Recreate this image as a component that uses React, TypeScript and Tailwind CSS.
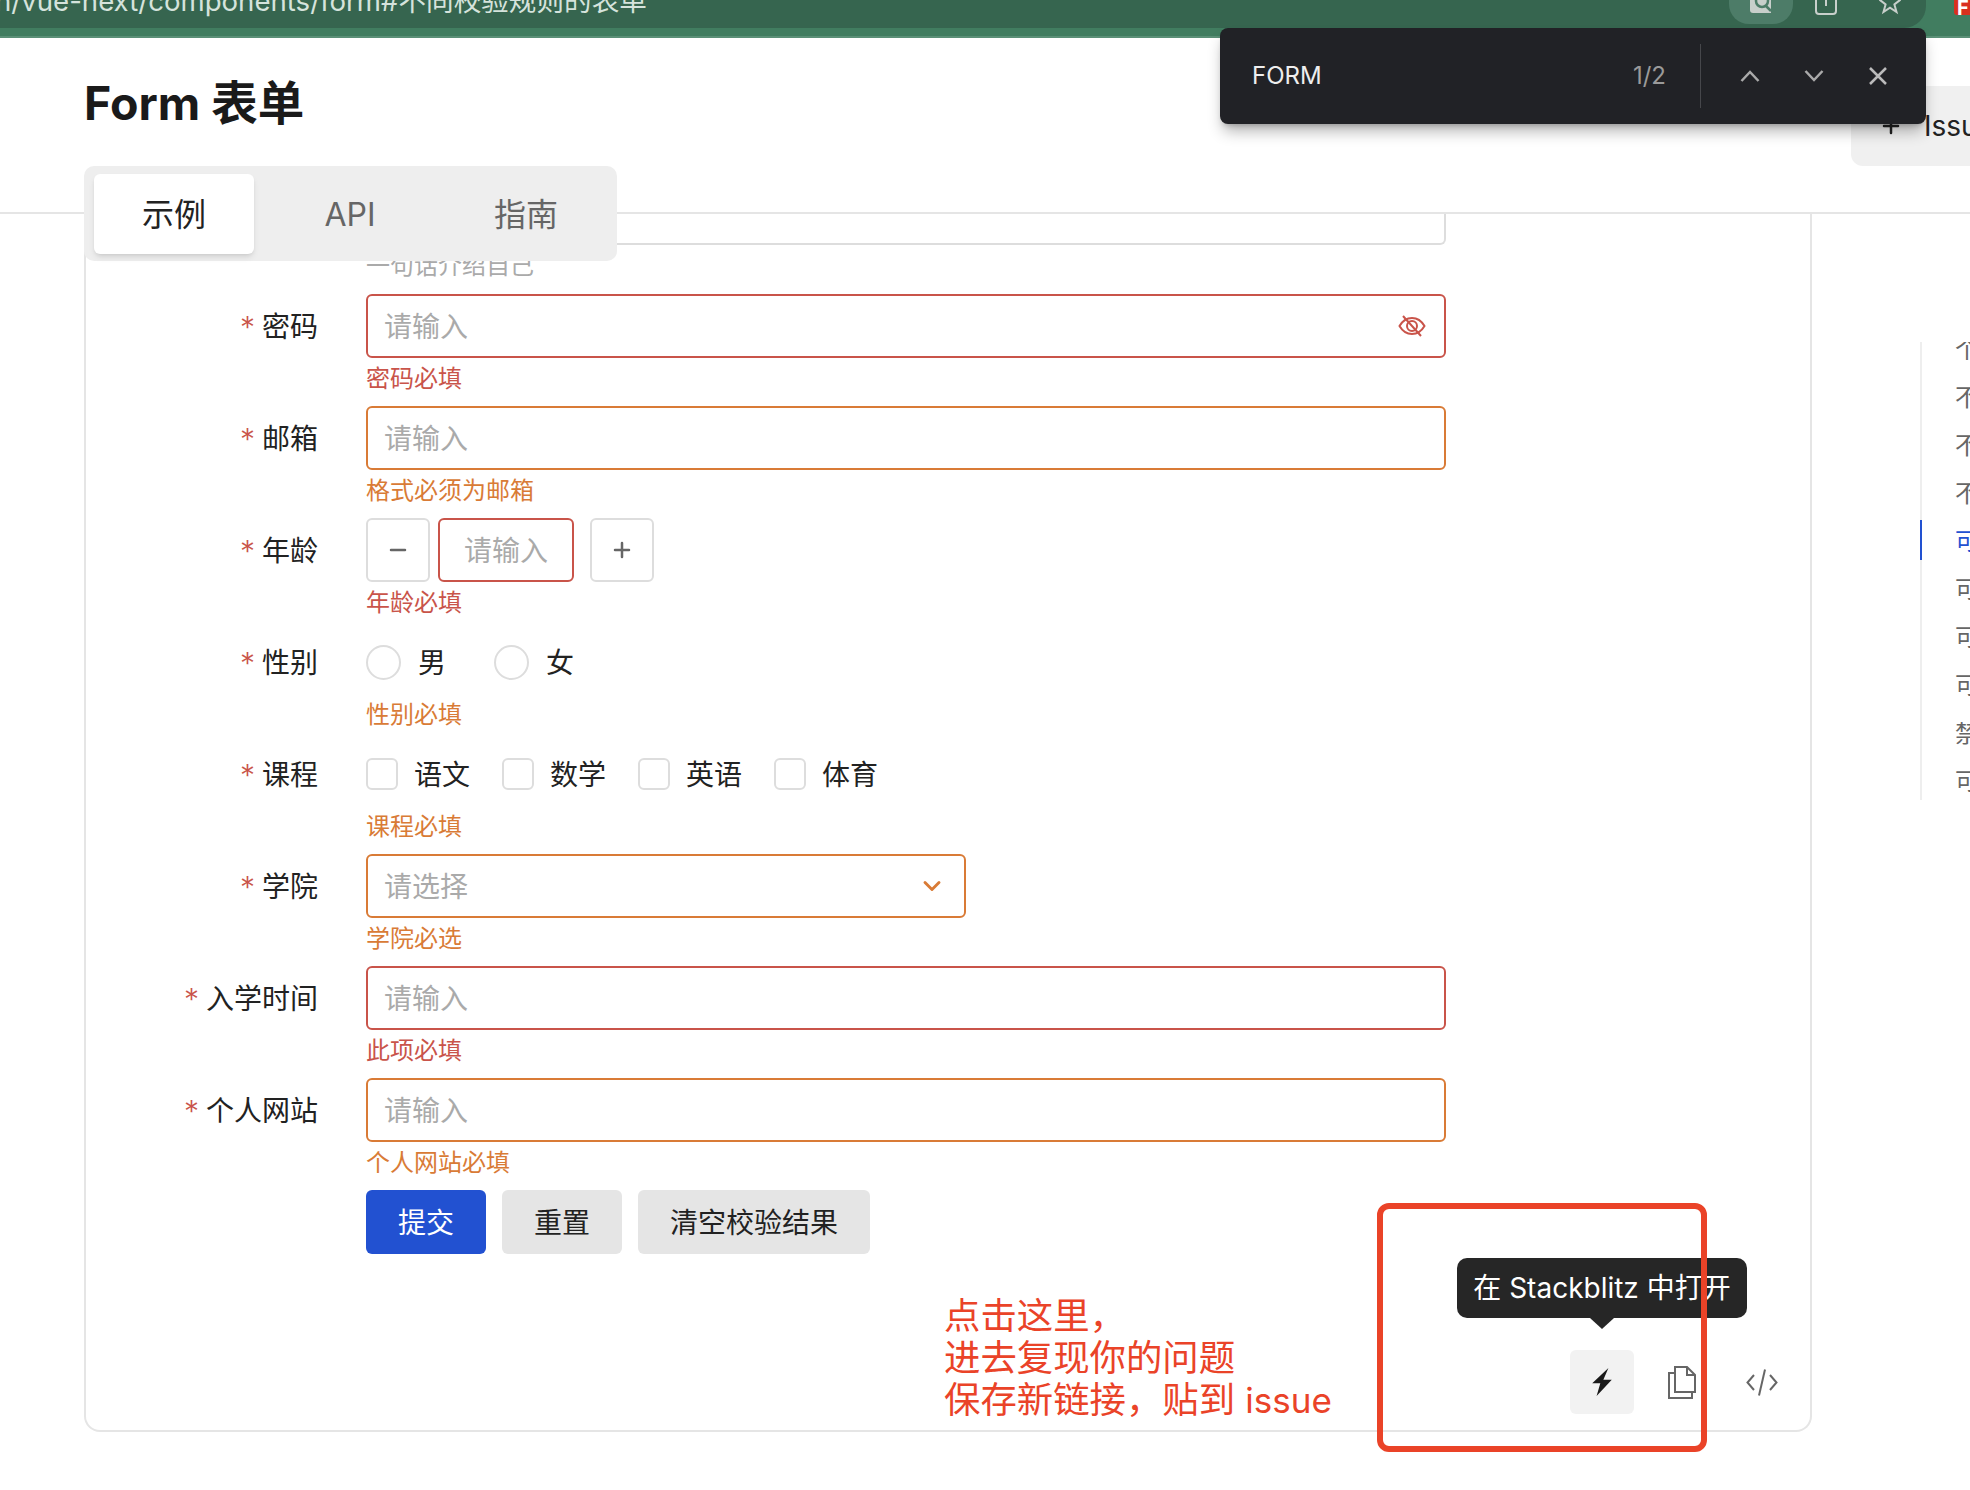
import React from 'react';
import { Plus, Minus, ChevronDown } from 'lucide-react';

type Tone = 'red' | 'orange';

const borderTone: Record<Tone, string> = { red: 'border-[#c9544a]', orange: 'border-[#d97b36]' };
const textTone: Record<Tone, string> = { red: 'text-[#c9544a]', orange: 'text-[#d97b36]' };

const Help = ({ tone, children }: { tone: Tone; children: React.ReactNode }) => (
  <div className={`h-[40px] text-[24px] leading-[41px] ${textTone[tone]}`}>{children}</div>
);

const Row = ({ label, children }: { label: string; children: React.ReactNode }) => (
  <div className="mb-2 flex">
    <div className="flex h-[64px] w-[232px] shrink-0 items-center justify-end pt-[2px] text-[28px] text-[#222]">
      <span className="mr-[7px] text-[30px] font-light text-[#c9544a]">*</span>
      {label}
    </div>
    <div className="ml-[48px]">{children}</div>
  </div>
);

const TextBox = ({ tone, text = '请输入', className = 'w-[1080px]', children }: { tone: Tone; text?: string; className?: string; children?: React.ReactNode }) => (
  <div className={`flex h-[64px] items-center justify-between rounded-md border-[2.5px] pl-[16px] pr-[18px] text-[28px] text-[#aaa] ${borderTone[tone]} ${className}`}>
    <span className="pt-[2px]">{text}</span>
    {children}
  </div>
);

const Radio = ({ label }: { label: string }) => (
  <div className="flex items-center">
    <span className="h-[35px] w-[35px] rounded-full border-2 border-[#ddd]" />
    <span className="ml-[17px] pt-[2px] text-[28px] text-[#222]">{label}</span>
  </div>
);

const Check = ({ label }: { label: string }) => (
  <div className="flex items-center">
    <span className="h-[32px] w-[32px] rounded-md border-2 border-[#ddd]" />
    <span className="ml-[16px] pt-[2px] text-[28px] text-[#222]">{label}</span>
  </div>
);

const StepButton = ({ children }: { children: React.ReactNode }) => (
  <div className="flex h-[64px] w-[64px] items-center justify-center rounded-md border-2 border-[#ddd] text-[#666]">{children}</div>
);

const tocItems = ['个人信息', '不同尺寸', '不同布局', '不同对齐', '可校验', '可重置', '可清空', '可分步', '禁用状态', '可自定义'];

export default function App() {
  return (
    <div className="relative h-[1490px] w-[1970px] overflow-hidden bg-white font-['Inter','Noto_Sans_CJK_SC',sans-serif]">
      {/* browser chrome, cut off at the top */}
      <div className="h-[38px] border-b-2 border-[#5b9077] bg-[#417d60]">
        <div className="flex h-[28px] w-[1926px] justify-between overflow-hidden rounded-br-[22px] bg-[#36654f]">
          <div className="-ml-[5px] -mt-[18px] whitespace-nowrap text-[27.6px] leading-[38px] text-[#d5e3dc]">n/vue-next/components/form#不同校验规则的表单</div>
          <div className="flex">
            <div className="mr-[21px] flex h-[24px] w-[64px] items-start justify-center rounded-b-[20px] bg-[#4d7c68]">
              <svg width="22" height="14" viewBox="0 0 22 14">
                <path d="M0 0 H21 V13 H3 A3 3 0 0 1 0 10 Z" fill="#c8cfcb" />
                <circle cx="12" cy="1" r="6" fill="none" stroke="#4d7c68" strokeWidth="2.5" />
                <path d="M16 6 L21 11" stroke="#4d7c68" strokeWidth="2.5" />
              </svg>
            </div>
            <div className="mr-[40px] flex h-[24px] w-[24px] items-start">
              <svg width="24" height="15" viewBox="0 0 24 15" fill="none" stroke="#c8cfcb" strokeWidth="2">
                <path d="M2 0 V11 A3 3 0 0 0 5 14 H19 A3 3 0 0 0 22 11 V0" />
                <path d="M12 0 V6" />
              </svg>
            </div>
            <div className="mr-[24px] flex w-[24px] items-start">
              <svg width="24" height="15" viewBox="0 0 24 15" fill="none" stroke="#c8cfcb" strokeWidth="2">
                <path d="M1.5 -0.4 L7.6 4.4 L5.5 12 L12 7.6 L18.5 12 L16.4 4.4 L22.5 -0.4" />
              </svg>
            </div>
          </div>
        </div>
      </div>

      {/* page header */}
      <div className="flex h-[176px] justify-between border-b-2 border-[#e5e5e5] pl-[84px]">
        <h1 className="mt-[35px] text-[46.5px] font-bold leading-[60px] text-[#1a1a1a]">Form 表单</h1>
        <div className="mt-[48px] flex h-[80px] w-[119px] items-center overflow-hidden rounded-l-xl bg-[#f0f0f0] pl-[28px] text-[28px] text-[#222]">
          <Plus className="shrink-0" size={24} strokeWidth={2.5} />
          <span className="ml-[21px]">Issue</span>
        </div>
      </div>

      <div className="flex">
        {/* demo card */}
        <div className="ml-[84px] h-[1218px] w-[1728px] shrink-0 rounded-b-2xl border-2 border-t-0 border-[#e5e5e5]">
          <div className="pl-[280px]">
            <div className="h-[31px] w-[1080px] rounded-b-md border-2 border-t-0 border-[#ddd]" />
            <div className="h-[49px] pt-[5px] text-[24px] leading-[32px] text-[#aaa]">一句话介绍自己</div>
          </div>

          <Row label="密码">
            <TextBox tone="red">
              <svg width="28" height="22" viewBox="0 0 28 22" fill="none" stroke="#c9544a" strokeWidth="2">
                <path d="M1.5 11 C5 5 10 3 14 3 C18 3 23 5 26.5 11 C23 17 18 19 14 19 C10 19 5 17 1.5 11 Z" />
                <circle cx="14" cy="11" r="5" />
                <path d="M5 1 L23 21" />
              </svg>
            </TextBox>
            <Help tone="red">密码必填</Help>
          </Row>

          <Row label="邮箱">
            <TextBox tone="orange" />
            <Help tone="orange">格式必须为邮箱</Help>
          </Row>

          <Row label="年龄">
            <div className="flex">
              <StepButton><Minus size={24} strokeWidth={2.5} /></StepButton>
              <div className="ml-[8px] flex h-[64px] w-[136px] items-center justify-center rounded-md border-[2.5px] border-[#c9544a] pt-[2px] text-[28px] text-[#aaa]">请输入</div>
              <div className="ml-[16px]"><StepButton><Plus size={24} strokeWidth={2.5} /></StepButton></div>
            </div>
            <Help tone="red">年龄必填</Help>
          </Row>

          <Row label="性别">
            <div className="flex h-[64px] items-center gap-[48px]">
              <Radio label="男" />
              <Radio label="女" />
            </div>
            <Help tone="orange">性别必填</Help>
          </Row>

          <Row label="课程">
            <div className="flex h-[64px] items-center gap-[32px]">
              <Check label="语文" />
              <Check label="数学" />
              <Check label="英语" />
              <Check label="体育" />
            </div>
            <Help tone="orange">课程必填</Help>
          </Row>

          <Row label="学院">
            <TextBox tone="orange" text="请选择" className="w-[600px]">
              <ChevronDown className="text-[#d97b36]" size={28} strokeWidth={2.5} />
            </TextBox>
            <Help tone="orange">学院必选</Help>
          </Row>

          <Row label="入学时间">
            <TextBox tone="red" />
            <Help tone="red">此项必填</Help>
          </Row>

          <Row label="个人网站">
            <TextBox tone="orange" />
            <Help tone="orange">个人网站必填</Help>
          </Row>

          <div className="flex gap-4 pl-[280px] text-[28px] text-[#222]">
            <div className="flex h-[64px] w-[120px] items-center justify-center rounded-md bg-[#2251d1] pt-[2px] text-white">提交</div>
            <div className="flex h-[64px] w-[120px] items-center justify-center rounded-md bg-[#e5e5e5] pt-[2px]">重置</div>
            <div className="flex h-[64px] w-[232px] items-center justify-center rounded-md bg-[#e5e5e5] pt-[2px]">清空校验结果</div>
          </div>

          {/* demo toolbar */}
          <div className="mt-[96px] flex justify-end gap-4 pr-4">
            <div className="relative flex h-[64px] w-[64px] items-center justify-center rounded-md bg-[#f2f2f2]">
              <svg width="20" height="28" viewBox="0 0 58 83" fill="#1a1a1a">
                <path d="M48 0 L0 45 H24 L13 83 L58 35 H33 Z" />
              </svg>
              <div className="absolute bottom-[85px] left-1/2 -translate-x-1/2">
                <div className="flex h-[60px] w-[290px] items-center justify-center whitespace-nowrap rounded-[10px] bg-[#262626] text-[28px] text-white">在 Stackblitz 中打开</div>
                <div className="mx-auto h-0 w-0 border-x-[12px] border-t-[11px] border-x-transparent border-t-[#262626]" />
              </div>
            </div>
            <div className="flex h-[64px] w-[64px] items-center justify-center">
              <svg width="28" height="33" viewBox="0 0 28 33" fill="none" stroke="#666" strokeWidth="2">
                <path d="M7 1 H19 L27 9 V26 H7 Z" />
                <path d="M19 1 V9 H27" />
                <path d="M7 7 H1 V32 H24 V26" />
              </svg>
            </div>
            <div className="flex h-[64px] w-[64px] items-center justify-center">
              <svg width="32" height="27" viewBox="0 0 32 27" fill="none" stroke="#666" strokeWidth="2">
                <path d="M8 6 L1.5 13.5 L8 21" />
                <path d="M19 0.5 L13 26.5" />
                <path d="M24 6 L30.5 13.5 L24 21" />
              </svg>
            </div>
          </div>
        </div>

        {/* anchor list, runs off the right edge */}
        <div className="relative ml-[108px] mt-[128px] h-[458px] w-[500px] shrink-0 overflow-hidden border-l-2 border-[#eee]">
          <div className="-mt-[16px] pl-[33px]">
            {tocItems.map((item, i) => (
              <div key={i} className={`h-[48px] whitespace-nowrap text-[24px] leading-[48px] ${i === 4 ? 'text-[#2251d1]' : 'text-[#666]'}`}>{item}</div>
            ))}
          </div>
        </div>
      </div>

      <div className="absolute left-[1920px] top-[520px] h-[40px] w-[2px] bg-[#2251d1]" />

      {/* tabs stuck over the header line */}
      <div className="absolute left-[84px] top-[166px] flex h-[95px] w-[533px] rounded-[10px] bg-[#eee] px-[10px] pt-[8px] text-[32px] text-[#666]">
        <div className="flex h-[80px] w-[160px] items-center justify-center rounded-md bg-white pt-[2px] text-[#222] shadow-md">示例</div>
        <div className="flex h-[80px] w-[192px] items-center justify-center pt-[2px]">API</div>
        <div className="flex h-[80px] w-[160px] items-center justify-center pt-[2px]">指南</div>
      </div>

      {/* browser find bar */}
      <div className="absolute left-[1220px] top-[28px] flex h-[96px] w-[706px] items-center rounded-lg bg-[#212226] pl-[32px] pr-[39px] shadow-lg shadow-black/30">
        <span className="text-[24px] text-[#eee]">FORM</span>
        <span className="ml-auto text-[24px] text-[#9a9a9a]">1/2</span>
        <div className="ml-[34px] h-[64px] w-[1px] bg-[#46474b]" />
        <svg className="ml-[39px]" width="20" height="12" viewBox="0 0 20 12" fill="none" stroke="#aaa" strokeWidth="2.5"><path d="M1.5 11 L10 2 L18.5 11" /></svg>
        <svg className="ml-[44px]" width="20" height="12" viewBox="0 0 20 12" fill="none" stroke="#aaa" strokeWidth="2.5"><path d="M1.5 1 L10 10 L18.5 1" /></svg>
        <svg className="ml-[45px]" width="18" height="18" viewBox="0 0 18 18" fill="none" stroke="#bbb" strokeWidth="2.5"><path d="M1 1 L17 17 M17 1 L1 17" /></svg>
      </div>

      {/* red badge of the extension at the top right */}
      <div className="absolute left-[1954px] top-0 h-[15px] w-[16px] overflow-hidden rounded-bl-[3px] bg-[#d9301f] pl-[3px] text-[20px] font-bold leading-[16px] text-white">F</div>

      {/* annotation drawn on the screenshot */}
      <div className="pointer-events-none absolute left-[1377px] top-[1203px] h-[249px] w-[330px] rounded-xl border-[6px] border-[#ea4328]" />
      <div className="absolute left-[944px] top-[1295px] text-[36.4px] leading-[42px] text-[#ea4328]">
        <div>点击这里，</div>
        <div>进去复现你的问题</div>
        <div>保存新链接，贴到 <span className="text-[35px]">issue</span></div>
      </div>
    </div>
  );
}
